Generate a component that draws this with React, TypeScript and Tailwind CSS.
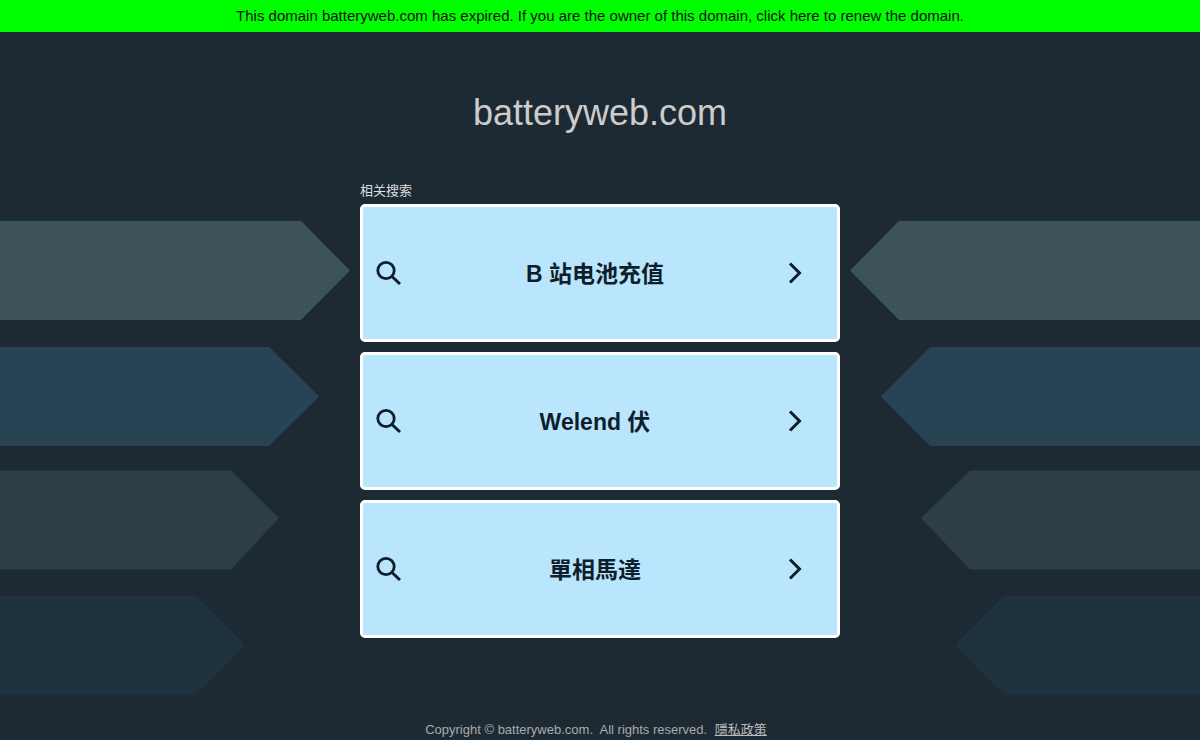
import React from 'react';

const font = "font-['Liberation_Sans','Noto_Sans_CJK_SC',sans-serif]";

// Background arrows
const leftArrows = [
    { tip: 350, shoulder: 301, top: 221, tipY: 270.5, color: '#3c5358' },
    { tip: 319, shoulder: 269, top: 347, tipY: 396.5, color: '#284454' },
    { tip: 279, shoulder: 231, top: 470.5, tipY: 518, color: '#2d3e46' },
    { tip: 245, shoulder: 196, top: 595.7, tipY: 645, color: '#1f3240' },
];
const rightArrows = [
    { tip: 850, shoulder: 899, top: 221, tipY: 270.5, color: '#3c5358' },
    { tip: 881, shoulder: 930, top: 347, tipY: 396.5, color: '#284454' },
    { tip: 921, shoulder: 970, top: 470.5, tipY: 518, color: '#2d3e46' },
    { tip: 955, shoulder: 1004, top: 595.7, tipY: 645, color: '#1f3240' },
];

const links = ['B 站电池充值', 'Welend 伏', '單相馬達'];

function SearchIcon() {
    return (
        <svg width="30" height="30" viewBox="0 0 30 30" fill="none" stroke="#0f1e2b" strokeWidth="2.8">
            <circle cx="13" cy="12.5" r="8.2" />
            <path d="M19 18.5 L27 26" strokeWidth="3" />
        </svg>
    );
}

function ChevronIcon() {
    return (
        <svg width="30" height="30" viewBox="0 0 30 30" fill="none" stroke="#0f1e2b" strokeWidth="3">
            <path d="M10 5.5 L19.5 15 L10 24.5" />
        </svg>
    );
}

function LinkCard({ label }: { label: string }) {
    return (
        <a href="#" className="flex h-[138px] items-center rounded-[5px] border-[3px] border-white bg-[#b9e5fd] pl-[10px]">
            <SearchIcon />
            <span className="flex-1 pt-[2px] pl-[14px] text-center text-[23px] font-bold text-[#0f1e2b]">{label}</span>
            <span className="mr-[27px] ml-[7px]"><ChevronIcon /></span>
        </a>
    );
}

export default function App() {
    return (
        <div className={`relative h-[740px] overflow-hidden bg-[#1e2a33] ${font}`}>
            {/* Panah latar */}
            <svg className="absolute inset-0" width="1200" height="740" aria-hidden="true">
                {leftArrows.map((a) => (
                    <g key={a.top}>
                        <polygon fill={a.color} points={`0,${a.top} ${a.shoulder},${a.top} ${a.tip},${a.tipY} ${a.shoulder},${a.top + 99} 0,${a.top + 99}`} />
                        <line x1={a.shoulder} x2={a.shoulder} y1={a.top} y2={a.top + 99} stroke="#000" strokeOpacity="0.025" />
                    </g>
                ))}
                {rightArrows.map((a) => (
                    <g key={a.top}>
                        <polygon fill={a.color} points={`1200,${a.top} ${a.shoulder},${a.top} ${a.tip},${a.tipY} ${a.shoulder},${a.top + 99} 1200,${a.top + 99}`} />
                        <line x1={a.shoulder} x2={a.shoulder} y1={a.top} y2={a.top + 99} stroke="#000" strokeOpacity="0.025" />
                    </g>
                ))}
            </svg>

            <div className="relative flex flex-col items-center">
                <a href="#" className="flex h-8 w-full items-center justify-center bg-[#00ff00] text-[15px] text-[#111]">
                    This domain batteryweb.com has expired. If you are the owner of this domain, click here to renew the domain.
                </a>

                <h1 className="mt-[60px] text-[36px] leading-[42px] text-[#cccccc]">batteryweb.com</h1>

                <div className="mt-[49px] w-[480px]">
                    <p className="text-[13px] leading-[15px] text-[#dddddd]">相关搜索</p>
                    <div className="mt-[6px] flex flex-col gap-[10px]">
                        {links.map((label) => (
                            <LinkCard key={label} label={label} />
                        ))}
                    </div>
                </div>

                <p className="mt-[84px] mr-[8px] text-[13px] leading-[16px] text-[#aaaaaa]">
                    Copyright © batteryweb.com.&nbsp; All rights reserved.&nbsp;
                    <a href="#" className="ml-[4px] text-[#bbbbbb] underline">隱私政策</a>
                </p>
            </div>
        </div>
    );
}
